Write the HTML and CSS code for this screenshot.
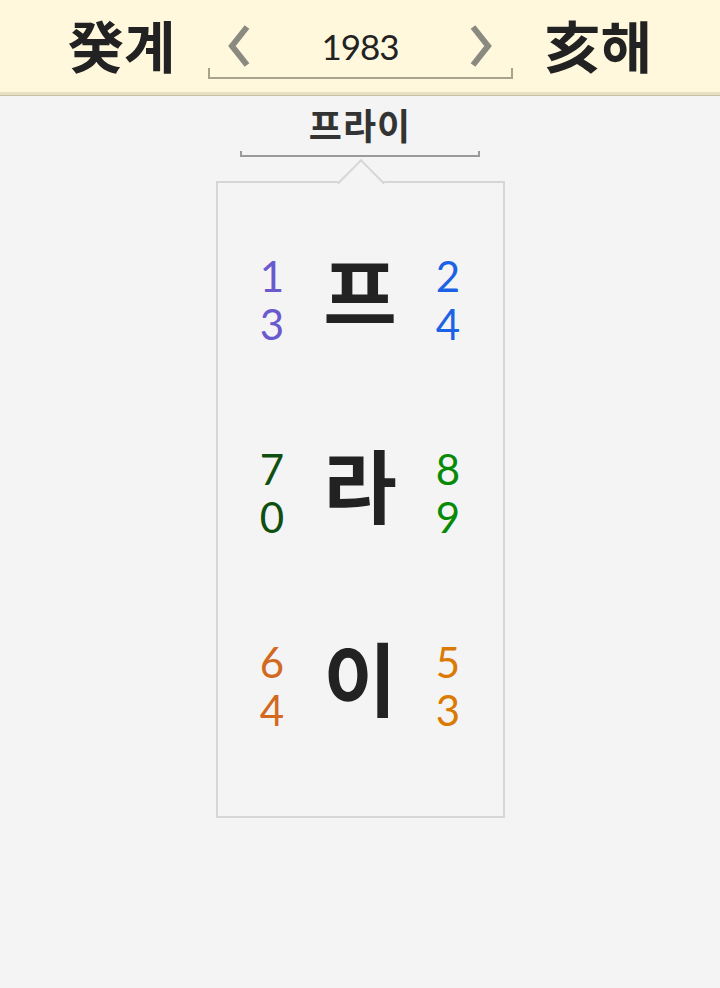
FILE: index.html
```html
<!DOCTYPE html>
<html lang="ko">
<head>
  <meta charset="UTF-8" />
  <meta name="viewport" content="width=device-width, initial-scale=1.0" />
  <title>프라이</title>
  <link rel="stylesheet" href="styles.css">
</head>
<body>
  <header class="topbar">
    <div class="ganji">癸계</div>
    <div class="year-nav">
      <button class="arrow" aria-label="이전">
        <svg width="26" height="44" viewBox="0 0 26 44"><polyline points="21,3 6,22 21,41" fill="none" stroke="#8a8a80" stroke-width="6"/></svg>
      </button>
      <div class="year">1983</div>
      <button class="arrow" aria-label="다음">
        <svg width="26" height="44" viewBox="0 0 26 44"><polyline points="5,3 20,22 5,41" fill="none" stroke="#8a8a80" stroke-width="6"/></svg>
      </button>
    </div>
    <div class="ganji">亥해</div>
  </header>

  <main class="content">
    <div class="word">프라이</div>
    <div class="bracket"></div>

    <div class="card">
      <div class="row">
        <div class="nums purple"><span>1</span><span>3</span></div>
        <div class="char">프</div>
        <div class="nums blue"><span>2</span><span>4</span></div>
      </div>
      <div class="row">
        <div class="nums darkgreen"><span>7</span><span>0</span></div>
        <div class="char">라</div>
        <div class="nums green"><span>8</span><span>9</span></div>
      </div>
      <div class="row">
        <div class="nums chocolate"><span>6</span><span>4</span></div>
        <div class="char">이</div>
        <div class="nums orange"><span>5</span><span>3</span></div>
      </div>
    </div>
  </main>
</body>
</html>
```

FILE: styles.css
```css
* {
  box-sizing: border-box;
  margin: 0;
  padding: 0;
}
body {
  background: #f4f4f4;
  font-family: "Noto Sans CJK KR", "Noto Sans", sans-serif;
  color: #222;
}
.topbar {
  height: 95px;
  background: #fff8dc;
  border-bottom: 3px solid #e6dfc2;
  box-shadow: 0 1px 0 #c9c1a6;
  display: flex;
  justify-content: center;
  align-items: center;
  gap: 32px;
  padding-bottom: 4px;
}
.ganji {
  font-size: 56px;
  font-weight: 700;
  color: #222;
  line-height: 1;
}
.year-nav {
  width: 305px;
  height: 54px;
  margin-top: 16px;
  display: flex;
  justify-content: space-between;
  align-items: center;
  padding: 0 16px 10px;
  border: 2px solid #a8a38d;
  border-top: none;
  border-image: linear-gradient(to bottom, transparent 0, transparent 44px, #a8a38d 44px) 1;
}
.arrow {
  background: none;
  border: none;
  display: flex;
}
.year {
  font-family: "Lato", "Noto Sans", sans-serif;
  font-size: 35px;
  color: #222;
  letter-spacing: -1px;
}
.content {
  display: flex;
  flex-direction: column;
  align-items: center;
  padding-top: 8px;
}
.word {
  font-size: 36px;
  font-weight: 700;
  color: #333;
  line-height: 42px;
  letter-spacing: 1px;
}
.bracket {
  width: 240px;
  height: 6px;
  margin-top: 6px;
  border: 2px solid #9a9a9a;
  border-top: none;
}
.card {
  position: relative;
  width: 289px;
  height: 637px;
  margin-top: 24px;
  border: 2px solid #d6d6d6;
  padding-top: 20px;
}
.card::before {
  content: "";
  position: absolute;
  top: -17px;
  left: 50%;
  width: 32px;
  height: 32px;
  margin-left: -16px;
  background: #f4f4f4;
  border-top: 2px solid #d6d6d6;
  border-left: 2px solid #d6d6d6;
  transform: rotate(45deg);
}
.row {
  height: 193px;
  display: flex;
  justify-content: center;
  align-items: center;
  gap: 20px;
}
.char {
  width: 96px;
  text-align: center;
  font-size: 80px;
  font-weight: 700;
  line-height: 1;
  margin-top: -22px;
}
.nums {
  width: 40px;
  display: flex;
  flex-direction: column;
  align-items: center;
  font-family: "Lato", "Noto Sans", sans-serif;
  font-size: 42px;
  line-height: 48px;
}
.purple { color: #6a5acd; }
.blue { color: #1c62e6; }
.darkgreen { color: #0f4f0f; }
.green { color: #078a07; }
.chocolate { color: #d2691e; }
.orange { color: #da7a00; }
```
